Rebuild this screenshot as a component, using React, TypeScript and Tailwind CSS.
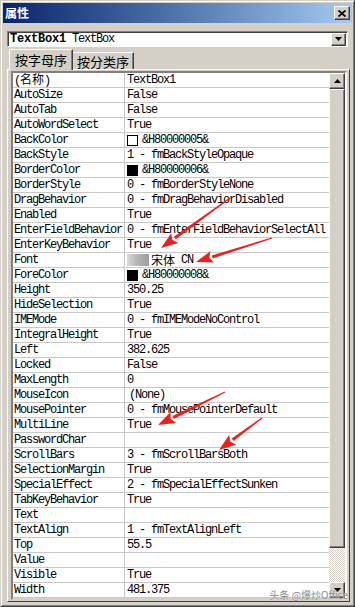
import { ReactNode } from 'react';

type Row = { name: ReactNode; key: string; value?: ReactNode };

const cjk = (s: string) => (
  <span className="tracking-normal font-['Noto_Sans_CJK_SC',sans-serif] text-[12px] leading-none">{s}</span>
);

const swatch = (color: string) => (
  <span className={`inline-block w-[11px] h-[11px] border border-black mr-[4px] align-middle ${color}`} />
);

const rows: Row[] = [
  { key: 'name', name: <>({cjk('名称')})</>, value: 'TextBox1' },
  { key: 'AutoSize', name: 'AutoSize', value: 'False' },
  { key: 'AutoTab', name: 'AutoTab', value: 'False' },
  { key: 'AutoWordSelect', name: 'AutoWordSelect', value: 'True' },
  { key: 'BackColor', name: 'BackColor', value: <>{swatch('bg-white')}&amp;H80000005&amp;</> },
  { key: 'BackStyle', name: 'BackStyle', value: '1 - fmBackStyleOpaque' },
  { key: 'BorderColor', name: 'BorderColor', value: <>{swatch('bg-black')}&amp;H80000006&amp;</> },
  { key: 'BorderStyle', name: 'BorderStyle', value: '0 - fmBorderStyleNone' },
  { key: 'DragBehavior', name: 'DragBehavior', value: '0 - fmDragBehaviorDisabled' },
  { key: 'Enabled', name: 'Enabled', value: 'True' },
  { key: 'EnterFieldBehavior', name: 'EnterFieldBehavior', value: '0 - fmEnterFieldBehaviorSelectAll' },
  { key: 'EnterKeyBehavior', name: 'EnterKeyBehavior', value: 'True' },
  {
    key: 'Font',
    name: 'Font',
    value: (
      <span className="flex items-center">
        <span className="inline-block w-[22px] h-[12px] mr-[2px] bg-gradient-to-r from-[#d8d8d8] via-[#b4b4b4] to-[#9c9c9c]" />
        {cjk('宋体')}
        <span>{'\u00a0CN'}</span>
      </span>
    ),
  },
  { key: 'ForeColor', name: 'ForeColor', value: <>{swatch('bg-black')}&amp;H80000008&amp;</> },
  { key: 'Height', name: 'Height', value: '350.25' },
  { key: 'HideSelection', name: 'HideSelection', value: 'True' },
  { key: 'IMEMode', name: 'IMEMode', value: '0 - fmIMEModeNoControl' },
  { key: 'IntegralHeight', name: 'IntegralHeight', value: 'True' },
  { key: 'Left', name: 'Left', value: '382.625' },
  { key: 'Locked', name: 'Locked', value: 'False' },
  { key: 'MaxLength', name: 'MaxLength', value: '0' },
  { key: 'MouseIcon', name: 'MouseIcon', value: <span className="pl-[2px]">(None)</span> },
  { key: 'MousePointer', name: 'MousePointer', value: '0 - fmMousePointerDefault' },
  { key: 'MultiLine', name: 'MultiLine', value: 'True' },
  { key: 'PasswordChar', name: 'PasswordChar' },
  { key: 'ScrollBars', name: 'ScrollBars', value: '3 - fmScrollBarsBoth' },
  { key: 'SelectionMargin', name: 'SelectionMargin', value: 'True' },
  { key: 'SpecialEffect', name: 'SpecialEffect', value: '2 - fmSpecialEffectSunken' },
  { key: 'TabKeyBehavior', name: 'TabKeyBehavior', value: 'True' },
  { key: 'Text', name: 'Text' },
  { key: 'TextAlign', name: 'TextAlign', value: '1 - fmTextAlignLeft' },
  { key: 'Top', name: 'Top', value: '55.5' },
  { key: 'Value', name: 'Value' },
  { key: 'Visible', name: 'Visible', value: 'True' },
  { key: 'Width', name: 'Width', value: '481.375' },
];

const raised =
  'border border-t-white border-l-white border-r-[#404040] border-b-[#404040] shadow-[inset_-1px_-1px_#808080] bg-[#d4d0c8]';

function ArrowButton({ up, className = '' }: { up?: boolean; className?: string }) {
  return (
    <div className={`${raised} flex items-center justify-center ${className}`}>
      <svg width="7" height="4" viewBox="0 0 7 4">
        <polygon points={up ? '0,4 7,4 3.5,0' : '0,0 7,0 3.5,4'} fill="#000" />
      </svg>
    </div>
  );
}

// tapered red annotation arrow from tail to tip
function RedArrow({ from, to }: { from: [number, number]; to: [number, number] }) {
  const [x1, y1] = from;
  const [x2, y2] = to;
  const len = Math.hypot(x2 - x1, y2 - y1);
  const ux = (x2 - x1) / len;
  const uy = (y2 - y1) / len;
  const nx = -uy;
  const ny = ux;
  const hl = 17;
  const bx = x2 - ux * hl;
  const by = y2 - uy * hl;
  const p = (x: number, y: number) => `${x.toFixed(1)},${y.toFixed(1)}`;
  const shaft = [
    p(x1 + nx * 0.6, y1 + ny * 0.6),
    p(bx + nx * 1.6, by + ny * 1.6),
    p(bx - nx * 1.6, by - ny * 1.6),
    p(x1 - nx * 0.6, y1 - ny * 0.6),
  ].join(' ');
  const head = [p(x2, y2), p(bx + nx * 6, by + ny * 6), p(bx + ux * 3, by + uy * 3), p(bx - nx * 6, by - ny * 6)].join(' ');
  return (
    <>
      <polygon points={shaft} fill="#e8231f" />
      <polygon points={head} fill="#e8231f" />
    </>
  );
}

export default function App() {
  const mono = "font-['Liberation_Mono','Noto_Sans_CJK_SC',monospace] text-[12px] tracking-[-1.2px]";

  return (
    <div className="relative w-[355px] h-[607px] bg-[#d4d0c8] border border-t-[#d4d0c8] border-l-[#d4d0c8] border-r-[#404040] border-b-[#404040] overflow-hidden">
      <div className="h-full border border-t-white border-l-white border-r-[#808080] border-b-[#808080] p-[1px] flex flex-col">
        {/* title bar */}
        <div className="h-[20px] flex items-center justify-between bg-gradient-to-r from-[#0a246a] to-[#a6caf0] pl-[2px] pr-[2px]">
          <span className="text-white text-[12px] font-bold font-['Noto_Sans_CJK_SC',sans-serif] leading-none">属性</span>
          <div className={`${raised} w-[16px] h-[14px] flex items-center justify-center`}>
            <svg width="8" height="7" viewBox="0 0 8 7">
              <path d="M0.5 0.5 L7.5 6.5 M7.5 0.5 L0.5 6.5" stroke="#000" strokeWidth="1.8" />
            </svg>
          </div>
        </div>

        {/* object combo */}
        <div className="mt-[8px] ml-[4px] mr-[4px] h-[16px] bg-white border border-t-[#808080] border-l-[#808080] border-r-white border-b-white shadow-[inset_1px_1px_#404040] flex items-center">
          <div className={`flex-1 pl-[2px] leading-none ${mono}`}>
            <span className="font-bold tracking-[-0.2px]">TextBox1</span> TextBox
          </div>
          <ArrowButton className="w-[15px] h-[13px] mr-[1px]" />
        </div>

        {/* tabs */}
        <div className="mt-[1px] h-[21px] flex items-end pl-[6px] font-['Noto_Sans_CJK_SC',sans-serif] text-[13px] text-black">
          <div className="relative z-10 -mb-[1px] h-[21px] px-[5px] pt-[1px] bg-[#d4d0c8] border-t border-l border-r border-t-white border-l-white border-r-[#404040] shadow-[inset_-1px_0_#808080] flex items-start leading-[18px]">
            按字母序
          </div>
          <div className="h-[17px] px-[4px] bg-[#d4d0c8] border-t border-r border-t-white border-r-[#404040] shadow-[inset_-1px_0_#808080] flex items-center leading-none">
            按分类序
          </div>
        </div>

        {/* panel */}
        <div className="ml-[4px] w-[343px] border border-t-white border-l-white border-r-[#404040] border-b-[#404040] pl-[3px] pr-[2px] pt-[1px] pb-[1px]">
          <div className="w-[336px] border-2 border-t-[#808080] border-l-[#808080] border-r-white border-b-[#d4d0c8] shadow-[inset_1px_1px_#404040] flex">
            <div className={`w-[316px] bg-white text-black ${mono}`}>
              {rows.map((r) => (
                <div key={r.key} className="h-[15px] flex border-b border-[#c8c8c8]">
                  <div className="w-[112px] shrink-0 border-r border-[#c8c8c8] pl-[1px] leading-[14px] whitespace-nowrap">
                    {r.name}
                  </div>
                  <div className="flex-1 pl-[2px] leading-[14px] whitespace-nowrap flex items-center">
                    {r.value}
                  </div>
                </div>
              ))}
            </div>
            <div className="w-[16px] flex flex-col">
              <ArrowButton up className="h-[16px]" />
              <div className={`${raised} h-[459px]`} />
              <div className="h-[34px] bg-[repeating-conic-gradient(#d4d0c8_0_25%,#ffffff_0_50%)] bg-[length:2px_2px]" />
              <ArrowButton className="h-[16px]" />
            </div>
          </div>
        </div>
      </div>

      {/* annotations */}
      <svg className="absolute inset-0 pointer-events-none" width="355" height="607">
        <RedArrow from={[229, 197]} to={[160, 247]} />
        <RedArrow from={[271, 237]} to={[195, 261]} />
        <RedArrow from={[224, 391]} to={[157, 424]} />
        <RedArrow from={[261, 417]} to={[218, 449]} />
      </svg>
      <div className="absolute right-[6px] bottom-[6px] text-[10px] leading-none text-[#8a8a8a] font-['Noto_Sans_CJK_SC',sans-serif] [text-shadow:0_0_1px_#fff]">
        头条 @爆炒Office
      </div>
    </div>
  );
}
